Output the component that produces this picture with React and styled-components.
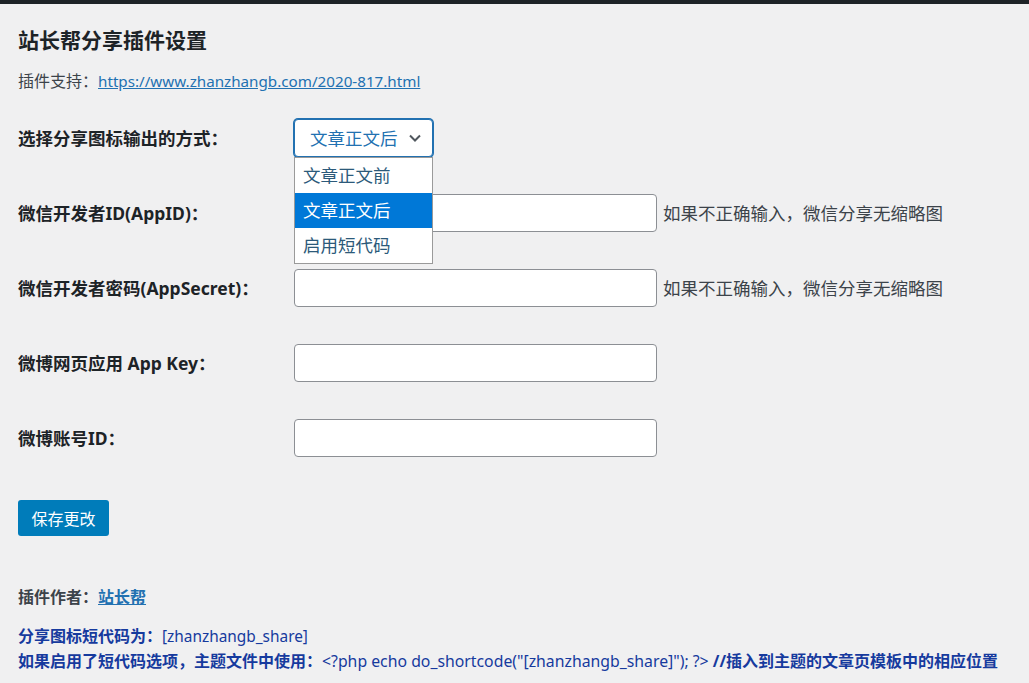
import React from "react"
import styled, { createGlobalStyle } from "styled-components"

const GlobalStyle = createGlobalStyle`
  html, body {
    margin: 0;
    padding: 0;
    background: #f0f0f1;
  }
  body {
    font-family: "Noto Sans", "Noto Sans CJK SC", sans-serif;
    color: #3c434a;
  }
`

const TopBar = styled.div`
  height: 4px;
  background: #1d2327;
`

const Wrap = styled.div`
  padding: 0 18px;
  position: relative;
`

const Title = styled.h1`
  margin: 22px 0 0;
  font-size: 21px;
  line-height: 28px;
  font-weight: 700;
  color: #1d2327;
`

const Support = styled.p`
  margin: 15px 0 0;
  font-size: 16px;
  line-height: 24px;
  color: #3c434a;
`

const Link = styled.a`
  color: #2271b1;
  text-decoration: underline;
  font-size: ${p => p.$size || "inherit"};
`

const Form = styled.div`
  margin-top: 7px;
  display: grid;
  grid-template-columns: 276px 1fr;
  grid-auto-rows: 75px;
  align-items: center;
`

const Label = styled.div`
  font-size: 17.5px;
  font-weight: 700;
  color: #1d2327;
`

const Field = styled.div`
  display: flex;
  align-items: center;
  position: relative;
`

const SelectBox = styled.div`
  box-sizing: border-box;
  width: 139px;
  height: 38px;
  border: 1px solid #2271b1;
  box-shadow: 0 0 0 1px #2271b1;
  border-radius: 4px;
  background: #fff;
  display: flex;
  align-items: center;
  justify-content: space-between;
  padding: 0 10px 0 15px;
  font-size: 17.5px;
  color: #2271b1;
`

const Menu = styled.ul`
  position: absolute;
  left: 0;
  top: 38px;
  margin: 0;
  padding: 0;
  list-style: none;
  width: 139px;
  box-sizing: border-box;
  border: 1px solid #9a9a9a;
  background: #fff;
  z-index: 5;
`

const Option = styled.li`
  height: 35px;
  line-height: 35px;
  padding-left: 8px;
  font-size: 17.5px;
  color: ${p => (p.$active ? "#fff" : "#2c5a7a")};
  background: ${p => (p.$active ? "#0078d7" : "#fff")};
`

const Input = styled.div`
  box-sizing: border-box;
  width: 363px;
  height: 38px;
  border: 1px solid #8c8f94;
  border-radius: 4px;
  background: #fff;
`

const Help = styled.span`
  margin-left: 6px;
  font-size: 17.5px;
  color: #3c434a;
`

const Button = styled.button`
  margin-top: 25px;
  width: 91px;
  height: 36px;
  border: none;
  border-radius: 3px;
  background: #007cba;
  color: #fff;
  font-family: inherit;
  font-size: 16px;
  padding: 0;
`

const Author = styled.p`
  margin: 49px 0 0;
  font-size: 16px;
  line-height: 24px;
  font-weight: 700;
  color: #3c434a;
`

const Notes = styled.div`
  margin-top: 15px;
  font-size: 16px;
  line-height: 25px;
  color: #163a9e;
`

const NoteLine = styled.div`
  white-space: nowrap;
`

const B = styled.b`
  font-weight: 700;
`

const Code = styled.span`
  font-size: ${p => p.$size || "15.4px"};
`

const Chevron = () => (
  <svg width="14" height="14" viewBox="0 0 14 14">
    <polyline points="2,4.5 7,9.5 12,4.5" fill="none" stroke="#50575e" strokeWidth="2" />
  </svg>
)

export default function App() {
  return (
    <>
      <GlobalStyle />
      <TopBar />
      <Wrap>
        <Title>站长帮分享插件设置</Title>
        <Support>
          插件支持：<Link href="#" $size="15.2px">https://www.zhanzhangb.com/2020-817.html</Link>
        </Support>
        <Form>
          <Label>选择分享图标输出的方式：</Label>
          <Field>
            <SelectBox>
              <span>文章正文后</span>
              <Chevron />
            </SelectBox>
            <Menu>
              <Option>文章正文前</Option>
              <Option $active>文章正文后</Option>
              <Option>启用短代码</Option>
            </Menu>
          </Field>

          <Label>微信开发者ID(AppID)：</Label>
          <Field>
            <Input />
            <Help>如果不正确输入，微信分享无缩略图</Help>
          </Field>

          <Label>微信开发者密码(AppSecret)：</Label>
          <Field>
            <Input />
            <Help>如果不正确输入，微信分享无缩略图</Help>
          </Field>

          <Label>微博网页应用 App Key：</Label>
          <Field>
            <Input />
          </Field>

          <Label>微博账号ID：</Label>
          <Field>
            <Input />
          </Field>
        </Form>
        <Button>保存更改</Button>
        <Author>
          插件作者：<Link href="#">站长帮</Link>
        </Author>
        <Notes>
          <NoteLine>
            <B>分享图标短代码为：</B><Code>[zhanzhangb_share]</Code>
          </NoteLine>
          <NoteLine>
            <B>如果启用了短代码选项，主题文件中使用：</B><Code $size="15.8px">&lt;?php echo do_shortcode("[zhanzhangb_share]"); ?&gt; </Code><B>//插入到主题的文章页模板中的相应位置</B>
          </NoteLine>
        </Notes>
      </Wrap>
    </>
  )
}
